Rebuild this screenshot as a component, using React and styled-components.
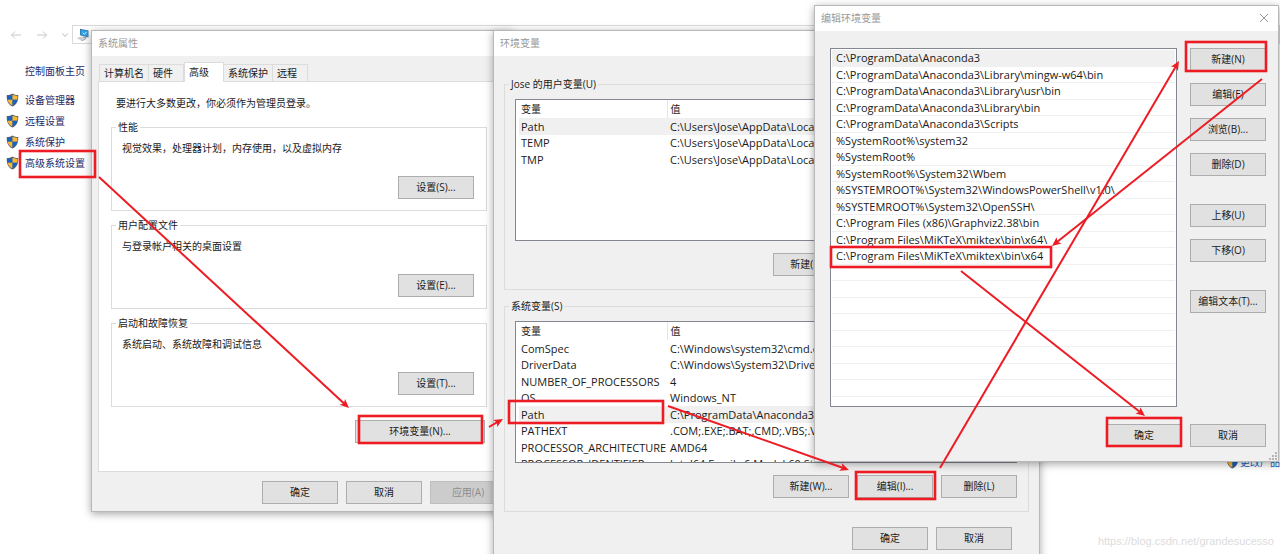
import React from "react";
import styled, { createGlobalStyle } from "styled-components";

const GlobalStyle = createGlobalStyle`
  * {
    box-sizing: border-box;
  }

  body {
    margin: 0;
    background: #fff;
  }
`;

const Desktop = styled.div`
  background: #fff;
  color: #1a1a1a;
  font-family: "Open Sans", "Noto Sans CJK SC", sans-serif;
  font-size: 10px;
  line-height: 16px;
  min-height: 100vh;
  overflow: hidden;
  position: relative;

  button {
    color: inherit;
    font: inherit;
  }
`;

const TopBar = styled.div`
  align-items: center;
  display: flex;
  gap: 14px;
  padding: 25px 0 0 10px;
`;

const NavButton = styled.button`
  background: none;
  border: 0;
  display: flex;
  padding: 0;
`;

const Address = styled.div`
  align-items: center;
  border: 1px solid #d9d9d9;
  display: flex;
  flex: 1;
  gap: 16px;
  height: 19px;
  margin-left: -10px;
  padding-left: 3px;
`;

const Explorer = styled.div`
  display: flex;
  justify-content: space-between;
`;

const Sidebar = styled.nav`
  padding: 16px 0 0 6px;
`;

const SideLink = styled.a`
  align-items: center;
  color: ${props => props.$color || "#1f2a68"};
  display: flex;
  gap: ${props => props.$gap || 6}px;
  height: 21px;
  text-decoration: none;
  white-space: nowrap;
`;

const HomeLink = styled(SideLink)`
  margin: 0 0 8px 19px;
`;

const Product = styled.div`
  margin-right: -20px;
  padding-top: 407px;
`;

const Window = styled.section`
  background: #f0f0f0;
  border: 1px solid #b8b8b8;
  box-shadow: 0 2px 8px rgba(0, 0, 0, 0.35);
  left: ${props => props.$left}px;
  position: absolute;
  top: ${props => props.$top}px;
  width: ${props => props.$width}px;
`;

const TitleBar = styled.header`
  align-items: center;
  background: #fff;
  color: #999;
  display: flex;
  height: 25px;
  justify-content: space-between;
  padding: 0 9px 1px 6px;
`;

const Button = styled.button`
  background: ${props => (props.disabled ? "#ccc" : "#e1e1e1")};
  border: 1px solid ${props => (props.disabled ? "#bfbfbf" : "#adadad")};
  height: 23px;
  padding: 0 0 2px;
  white-space: nowrap;
  width: ${props => props.$width || 76}px;

  &&:disabled {
    color: #8c8c8c;
  }
`;

const Buttons = styled.div`
  display: flex;
  gap: 8px;
  justify-content: flex-end;
  padding: ${props => props.$padding || "0"};
`;

const Tabs = styled.div`
  align-items: flex-end;
  display: flex;
  height: 25px;
  padding-left: 7px;
`;

const Tab = styled.button`
  background: ${props => (props.$active ? "#fff" : "#f0f0f0")};
  border: 1px solid #dcdcdc;
  border-bottom: 0;
  border-left-width: ${props => (props.$first || props.$active ? 1 : 0)}px;
  height: ${props => (props.$active ? 20 : 17)}px;
  margin-bottom: ${props => (props.$active ? -1 : 0)}px;
  min-width: ${props => (props.$active ? 40 : 35)}px;
  padding: 0 4px ${props => (props.$active ? 2 : 0)}px;
  position: relative;
  text-align: left;
`;

const TabPage = styled.div`
  background: #fff;
  border: 1px solid #dcdcdc;
  margin: 0 6px;
  padding: 13px 18px 28px 12px;
`;

const Note = styled.p`
  margin: 0 0 8px 5px;
`;

const Group = styled.fieldset`
  border: 1px solid #dcdcdc;
  margin: 0 0 ${props => props.$gap}px;
  min-width: 0;
  padding: ${props => props.$padding};
`;

const Legend = styled.legend`
  margin-left: ${props => props.$indent}px;
  padding: 0 2px;
`;

const Description = styled.p`
  margin: 0 0 20px;
`;

const EnvBody = styled.div`
  padding: 20px 10px 0;
`;

const TableBox = styled.div`
  background: #fff;
  border: 1px solid #828790;
  height: 142px;
  margin-bottom: 12px;
  overflow: hidden;
  padding-left: 3px;
`;

const Table = styled.table`
  border-collapse: collapse;
  font-size: 11px;
  table-layout: fixed;
  width: 100%;

  th,
  td {
    font-weight: normal;
    height: 17px;
    line-height: 16px;
    overflow: hidden;
    padding: 0 0 0 2px;
    text-align: left;
    white-space: nowrap;
  }

  tr:nth-child(even) td {
    height: 16px;
  }

  th {
    font-size: 10px;
    height: 18px;
  }

  th:first-child {
    border-right: 1px solid #e5e5e5;
    width: 148px;
  }

  td + td,
  th + th {
    padding-left: 3px;
  }
`;

const VariableRow = styled.tr`
  background: ${props => (props.$selected ? "#f0f0f0" : "none")};
`;

const EditBody = styled.div`
  display: flex;
  gap: 13px;
  padding: 17px 12px 17px 15px;
`;

const PathList = styled.ul`
  background: #fff;
  border: 1px solid #828790;
  flex: 1;
  font-size: 11px;
  list-style: none;
  margin: 0;
  padding: 1px 1px 9px;
`;

const PathItem = styled.li`
  background: ${props => (props.$selected ? "#f0f0f0" : "none")};
  border-bottom: 1px solid #f0f0f0;
  height: 16px;
  line-height: 16px;
  padding-left: 4px;
  white-space: nowrap;

  &:nth-child(odd) {
    height: 17px;
  }
`;

const SideButtons = styled.div`
  display: flex;
  flex-direction: column;
  gap: 28px;
`;

const ButtonGroup = styled.div`
  display: flex;
  flex-direction: column;
  gap: 12px;
`;

const Grip = styled.svg`
  bottom: 1px;
  position: absolute;
  right: 1px;
`;

const Marks = styled.svg`
  height: 100%;
  left: 0;
  pointer-events: none;
  position: absolute;
  top: 0;
  width: 100%;
`;

const Watermark = styled.div`
  bottom: 5px;
  color: #dcdcdc;
  font-family: "Liberation Sans", Arial, sans-serif;
  font-size: 11px;
  position: absolute;
  right: 6px;
`;

const sideLinks = ["设备管理器", "远程设置", "系统保护", "高级系统设置"];

const tabs = ["计算机名", "硬件", "高级", "系统保护", "远程"];

const settings = [
  { title: "性能", text: "视觉效果，处理器计划，内存使用，以及虚拟内存", button: "设置(S)..." },
  { title: "用户配置文件", text: "与登录帐户相关的桌面设置", button: "设置(E)..." },
  { title: "启动和故障恢复", text: "系统启动、系统故障和调试信息", button: "设置(T)..." }
];

const userVariables = [
  ["Path", "C:\\Users\\Jose\\AppData\\Local\\Microsoft\\WindowsApps;"],
  ["TEMP", "C:\\Users\\Jose\\AppData\\Local\\Temp"],
  ["TMP", "C:\\Users\\Jose\\AppData\\Local\\Temp"]
];

const systemVariables = [
  ["ComSpec", "C:\\Windows\\system32\\cmd.exe"],
  ["DriverData", "C:\\Windows\\System32\\Drivers\\DriverData"],
  ["NUMBER_OF_PROCESSORS", "4"],
  ["OS", "Windows_NT"],
  ["Path", "C:\\ProgramData\\Anaconda3;C:\\ProgramData\\Anaconda3\\Library"],
  ["PATHEXT", ".COM;.EXE;.BAT;.CMD;.VBS;.VBE;.JS;.JSE;.WSF;.WSH;.MSC"],
  ["PROCESSOR_ARCHITECTURE", "AMD64"],
  ["PROCESSOR_IDENTIFIER", "Intel64 Family 6 Model 60 Stepping 3, GenuineIntel"]
];

const paths = [
  "C:\\ProgramData\\Anaconda3",
  "C:\\ProgramData\\Anaconda3\\Library\\mingw-w64\\bin",
  "C:\\ProgramData\\Anaconda3\\Library\\usr\\bin",
  "C:\\ProgramData\\Anaconda3\\Library\\bin",
  "C:\\ProgramData\\Anaconda3\\Scripts",
  "%SystemRoot%\\system32",
  "%SystemRoot%",
  "%SystemRoot%\\System32\\Wbem",
  "%SYSTEMROOT%\\System32\\WindowsPowerShell\\v1.0\\",
  "%SYSTEMROOT%\\System32\\OpenSSH\\",
  "C:\\Program Files (x86)\\Graphviz2.38\\bin",
  "C:\\Program Files\\MiKTeX\\miktex\\bin\\x64\\",
  "C:\\Program Files\\MiKTeX\\miktex\\bin\\x64"
];

// the list keeps drawing its grid lines below the last entry
const pathRows = [...paths, ...Array(21 - paths.length).fill("")];

const editButtons = [
  ["新建(N)", "编辑(E)", "浏览(B)...", "删除(D)"],
  ["上移(U)", "下移(O)"],
  ["编辑文本(T)..."]
];

// x, y, width, height
const boxes = [
  [20, 151, 75, 26],
  [359, 416, 123, 27],
  [509, 401, 154, 22],
  [856, 472, 79, 27],
  [1186, 42, 80, 29],
  [831, 247, 220, 20],
  [1107, 418, 74, 28]
];

// x1, y1, x2, y2
const arrows = [
  [99, 177, 349, 408],
  [489, 427, 503, 419],
  [668, 406, 849, 470],
  [940, 468, 1179, 61],
  [1262, 79, 1052, 246],
  [961, 271, 1145, 416]
];

const Shield = () => (
  <svg width="13" height="14" viewBox="0 0 13 14" aria-hidden="true">
    <path
      d="M6.5 .4C4.800 1.500 2.800 1.900 .8 2c-.4 5 .9 9.300 5.700 11.600C11.300 11.300 12.600 7 12.200 2 10.200 1.900 8.200 1.500 6.500 .4z"
      fill="#5e6166"
    />
    <path d="M6.500 1.800v4.900H1.700C1.500 5.500 1.500 4.300 1.600 3c1.700-.1 3.400-.5 4.900-1.200z" fill="#1464c4" />
    <path d="M6.500 1.800v4.900h4.800c.2-1.200.2-2.400.1-3.700-1.700-.1-3.400-.5-4.900-1.200z" fill="#fbb933" />
    <path d="M6.500 12.500V6.700H1.700c.6 2.700 2.200 4.700 4.800 5.800z" fill="#fbb933" />
    <path d="M6.500 12.500V6.700h4.800c-.6 2.700-2.200 4.700-4.800 5.800z" fill="#1464c4" />
  </svg>
);

const Computer = () => (
  <svg width="14" height="14" viewBox="0 0 14 14" aria-hidden="true">
    <path d="M4 .8l8.500 1.700v7L4 7.300z" fill="#3f6f96" />
    <path d="M4.700 1.700l7.100 1.400v5.400L4.700 6.700z" fill="#27a4ee" />
    <path d="M7 4.800l1.400 1.500L10.500 4" fill="none" stroke="#d5f1ff" />
    <path d="M7.500 8.300l3 .7-.5 2-3-.6z" fill="#8e9aa5" />
    <path d="M.5 10l5-1.500 4.500 1.700-5 2.300z" fill="#c7ced4" />
    <path d="M5 12.500l5-2.300.5.800-4.500 2.200z" fill="#a4adb5" />
  </svg>
);

const Arrow = ({ points: [x1, y1, x2, y2] }) => {
  const angle = (Math.atan2(y2 - y1, x2 - x1) * 180) / Math.PI;
  const length = Math.hypot(x2 - x1, y2 - y1);

  return (
    <g transform={`translate(${x1} ${y1}) rotate(${angle})`}>
      <path d={`M0 0H${length - 6}`} stroke="#ed1c24" strokeWidth="2" />
      <path d={`M${length} 0l-9 -4l2 4l-2 4z`} fill="#ed1c24" />
    </g>
  );
};

const Variables = ({ title, rows, gap, actions }) => (
  <Group $gap={gap} $padding="7px 11px 13px 10px">
    <Legend $indent={-6}>{title}</Legend>
    <TableBox>
      <Table>
        <thead>
          <tr>
            <th scope="col">变量</th>
            <th scope="col">值</th>
          </tr>
        </thead>
        <tbody>
          {rows.map(([name, value]) => (
            <VariableRow key={name} $selected={name === "Path"}>
              <td>{name}</td>
              <td>{value}</td>
            </VariableRow>
          ))}
        </tbody>
      </Table>
    </TableBox>
    <Buttons>
      {actions.map(action => (
        <Button key={action}>{action}</Button>
      ))}
    </Buttons>
  </Group>
);

const SystemProperties = () => (
  <Window $left={91} $top={30} $width={422} aria-label="系统属性">
    <TitleBar>系统属性</TitleBar>
    <Tabs role="tablist">
      {tabs.map((tab, i) => (
        <Tab key={tab} role="tab" aria-selected={tab === "高级"} $first={i === 0} $active={tab === "高级"}>
          {tab}
        </Tab>
      ))}
    </Tabs>
    <TabPage>
      <Note>要进行大多数更改，你必须作为管理员登录。</Note>
      {settings.map(({ title, text, button }) => (
        <Group key={title} $gap={6} $padding="5px 12px 11px 10px">
          <Legend $indent={-6}>{title}</Legend>
          <Description>{text}</Description>
          <Buttons>
            <Button>{button}</Button>
          </Buttons>
        </Group>
      ))}
      <Buttons $padding="7px 2px 0 0">
        <Button $width={130}>环境变量(N)...</Button>
      </Buttons>
    </TabPage>
    <Buttons $padding="9px 6px 7px">
      <Button>确定</Button>
      <Button>取消</Button>
      <Button disabled>应用(A)</Button>
    </Buttons>
  </Window>
);

const EnvironmentVariables = () => (
  <Window $left={493} $top={30} $width={547} aria-label="环境变量">
    <TitleBar>环境变量</TitleBar>
    <EnvBody>
      <Variables
        title="Jose 的用户变量(U)"
        rows={userVariables}
        gap={8}
        actions={["新建(N)...", "编辑(E)...", "删除(D)"]}
      />
      <Variables
        title="系统变量(S)"
        rows={systemVariables}
        gap={15}
        actions={["新建(W)...", "编辑(I)...", "删除(L)"]}
      />
    </EnvBody>
    <Buttons $padding="0 27px 14px">
      <Button>确定</Button>
      <Button>取消</Button>
    </Buttons>
  </Window>
);

const EditVariable = () => (
  <Window $left={814} $top={5} $width={465} aria-label="编辑环境变量">
    <TitleBar>
      编辑环境变量
      <NavButton aria-label="关闭">
        <svg width="10" height="10" viewBox="0 0 10 10" stroke="#999" fill="none">
          <path d="M1 1l8 8M9 1l-8 8" />
        </svg>
      </NavButton>
    </TitleBar>
    <EditBody>
      <PathList>
        {pathRows.map((path, i) => (
          <PathItem key={i} $selected={i === 0}>
            {path}
          </PathItem>
        ))}
      </PathList>
      <SideButtons>
        {editButtons.map(group => (
          <ButtonGroup key={group[0]}>
            {group.map(label => (
              <Button key={label}>{label}</Button>
            ))}
          </ButtonGroup>
        ))}
      </SideButtons>
    </EditBody>
    <Buttons $padding="0 12px 14px">
      <Button>确定</Button>
      <Button>取消</Button>
    </Buttons>
    <Grip width="8" height="8" viewBox="0 0 8 8" fill="#b5b5b5" aria-hidden="true">
      <path d="M6 0h2v2h-2zM3 3h2v2h-2zM6 3h2v2h-2zM0 6h2v2h-2zM3 6h2v2h-2zM6 6h2v2h-2z" />
    </Grip>
  </Window>
);

export default () => (
  <Desktop>
    <GlobalStyle />
    <TopBar>
      <NavButton aria-label="后退">
        <svg width="12" height="10" viewBox="0 0 12 10" fill="none" stroke="#c8c8c8">
          <path d="M11 5H1.500M5 1.500L1.500 5L5 8.500" />
        </svg>
      </NavButton>
      <NavButton aria-label="前进">
        <svg width="12" height="10" viewBox="0 0 12 10" fill="none" stroke="#c8c8c8">
          <path d="M1 5h9.500M7 1.500L10.500 5L7 8.500" />
        </svg>
      </NavButton>
      <NavButton aria-label="最近">
        <svg width="6" height="6" viewBox="0 0 6 6" fill="none" stroke="#bbb">
          <path d="M.5 1.500L3 4.500L5.500 1.500" />
        </svg>
      </NavButton>
      <Address>
        <Computer />
        <span>控制面板</span>
        <span>系统和安全</span>
        <span>系统</span>
      </Address>
    </TopBar>
    <Explorer>
      <Sidebar>
        <HomeLink href="#home">控制面板主页</HomeLink>
        {sideLinks.map(link => (
          <SideLink key={link} href={`#${link}`}>
            <Shield />
            {link}
          </SideLink>
        ))}
      </Sidebar>
      <Product>
        <SideLink href="#product" $color="#0f63c4" $gap={1}>
          <Shield />
          更改产品密钥
        </SideLink>
      </Product>
    </Explorer>
    <SystemProperties />
    <EnvironmentVariables />
    <EditVariable />
    <Marks aria-hidden="true">
      {boxes.map(([x, y, width, height]) => (
        <rect key={x} x={x} y={y} width={width} height={height} fill="none" stroke="#ed1c24" strokeWidth="2.6" />
      ))}
      {arrows.map(points => (
        <Arrow key={points[0]} points={points} />
      ))}
    </Marks>
    <Watermark>https://blog.csdn.net/grandesucesso</Watermark>
  </Desktop>
);
